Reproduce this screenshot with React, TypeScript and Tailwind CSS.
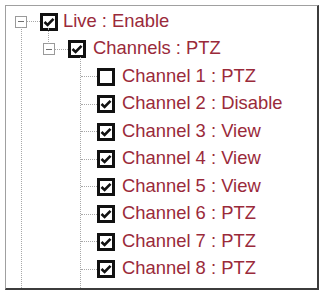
import React from 'react';

type Node = { label: string; checked: boolean };

const channels: Node[] = [
  { label: 'Channel 1 : PTZ', checked: false },
  { label: 'Channel 2 : Disable', checked: true },
  { label: 'Channel 3 : View', checked: true },
  { label: 'Channel 4 : View', checked: true },
  { label: 'Channel 5 : View', checked: true },
  { label: 'Channel 6 : PTZ', checked: true },
  { label: 'Channel 7 : PTZ', checked: true },
  { label: 'Channel 8 : PTZ', checked: true },
];

function CheckBox({ checked }: { checked: boolean }) {
  return (
    <div className="flex h-[18px] w-[18px] shrink-0 items-center justify-center border-[3px] border-[#111] bg-white">
      {checked && (
        <svg width="12" height="12" viewBox="0 0 12 12">
          <path d="M1.5 6 L4.6 9 L10.5 2.8" fill="none" stroke="#111" strokeWidth="2.6" />
        </svg>
      )}
    </div>
  );
}

function Expander() {
  return (
    <div className="flex h-[12px] w-[12px] shrink-0 items-center justify-center border border-[#9a9a9a] bg-white">
      <div className="h-px w-[6px] bg-[#707070]" />
    </div>
  );
}

function Label({ text }: { text: string }) {
  return <span className="whitespace-nowrap text-[18.4px] leading-none text-[#9a2a3a]">{text}</span>;
}

export default function App() {
  return (
    <div className="h-[293px] w-[321px] bg-white p-[5px] font-['Liberation_Sans',Arial,sans-serif]">
      <div className="relative h-[285px] w-[314px] border-t border-l border-[#a0a0a0] border-r-2 border-b-2 border-r-[#3c3c3c] border-b-[#3c3c3c] pt-[2px]">
        {/* tree guide lines */}
        <div className="absolute left-[15px] top-[21px] bottom-0 border-l border-dotted border-[#a8a8a8]" />
        <div className="absolute left-[42px] top-[22px] h-[16px] border-l border-dotted border-[#a8a8a8]" />
        <div className="absolute left-[74px] top-[51px] bottom-0 border-l border-dotted border-[#a8a8a8]" />

        <div className="flex h-[27.5px] items-center pl-[9px]">
          <Expander />
          <div className="w-[13px] border-t border-dotted border-[#a8a8a8]" />
          <CheckBox checked />
          <div className="ml-[5px]">
            <Label text="Live : Enable" />
          </div>
        </div>

        <div className="flex h-[27.5px] items-center pl-[37px]">
          <Expander />
          <div className="w-[13px] border-t border-dotted border-[#a8a8a8]" />
          <CheckBox checked />
          <div className="ml-[7px]">
            <Label text="Channels : PTZ" />
          </div>
        </div>

        {channels.map((c) => (
          <div key={c.label} className="flex h-[27.5px] items-center pl-[75px]">
            <div className="w-[16px] border-t border-dotted border-[#a8a8a8]" />
            <CheckBox checked={c.checked} />
            <div className="ml-[7px]">
              <Label text={c.label} />
            </div>
          </div>
        ))}
      </div>
    </div>
  );
}
